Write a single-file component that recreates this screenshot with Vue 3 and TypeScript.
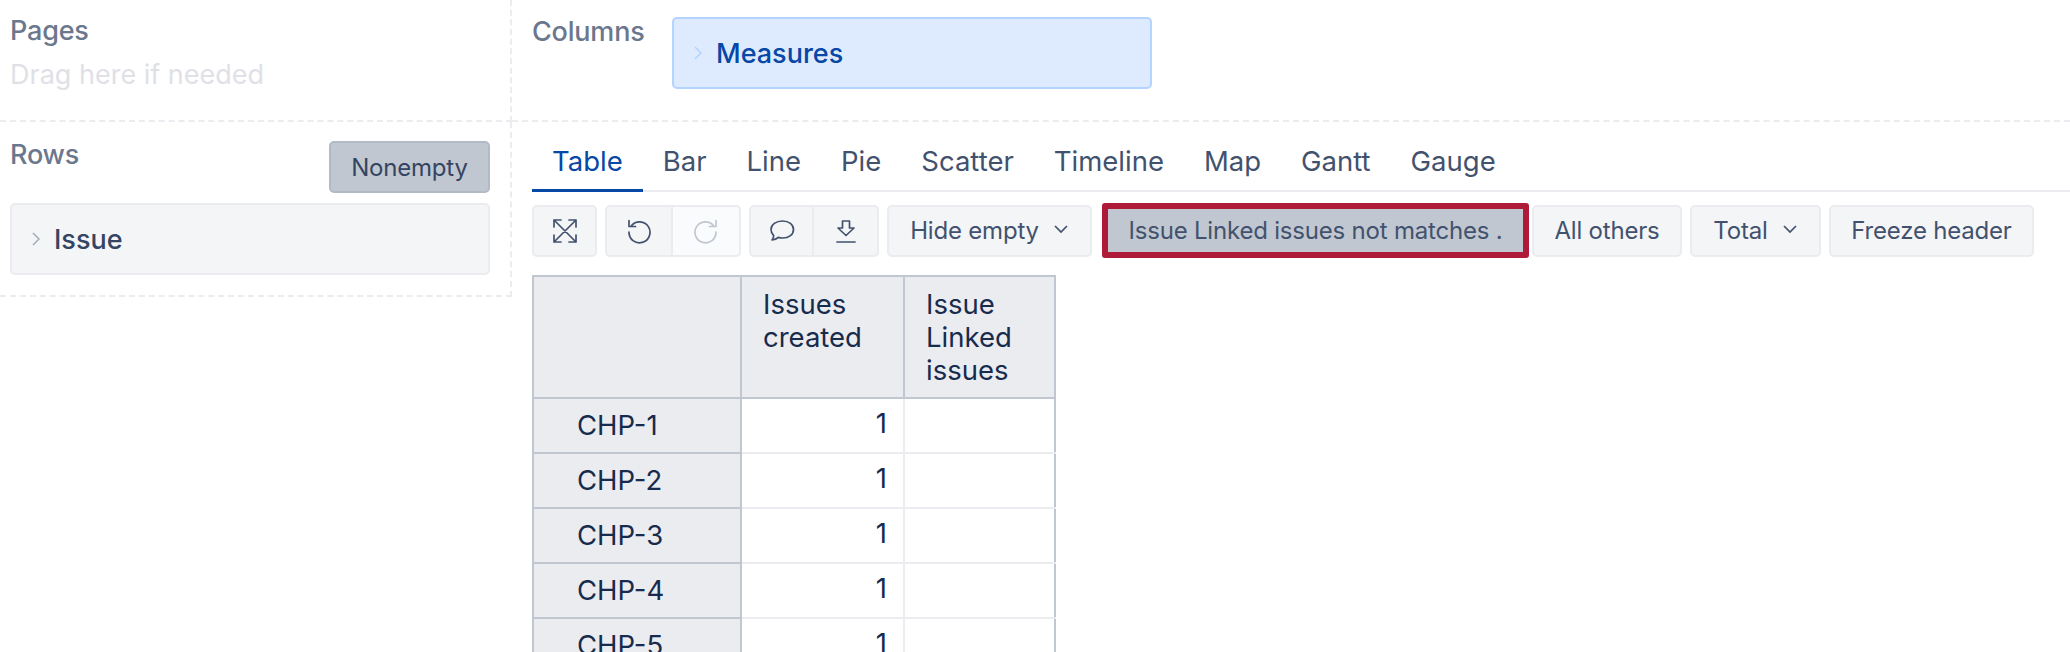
<script setup lang="ts">
const tabs: string[] = ['Table', 'Bar', 'Line', 'Pie', 'Scatter', 'Timeline', 'Map', 'Gantt', 'Gauge']
const rows: string[] = ['CHP-1', 'CHP-2', 'CHP-3', 'CHP-4', 'CHP-5']
</script>

<template>
  <div class="page">
    <section class="zone pages">
      <div class="label">Pages</div>
      <div class="hint">Drag here if needed</div>
    </section>
    <section class="zone columns">
      <div class="label">Columns</div>
      <div class="chip measures">
        <svg class="chev" viewBox="0 0 12 20" width="12" height="20"><path d="M3 4l6 6-6 6" /></svg>
        <span>Measures</span>
      </div>
    </section>
    <aside class="rows-zone">
      <div class="rows-head">
        <div class="label">Rows</div>
        <button class="btn active nonempty">Nonempty</button>
      </div>
      <div class="chip issue">
        <svg class="chev" viewBox="0 0 12 20" width="12" height="20"><path d="M3 4l6 6-6 6" /></svg>
        <span>Issue</span>
      </div>
    </aside>
    <main class="main">
      <nav class="tabs">
        <a v-for="(t, i) in tabs" :key="t" class="tab" :class="{ on: i === 0 }">{{ t }}</a>
      </nav>
      <div class="toolbar">
        <button class="btn icon solo" aria-label="Full screen">
          <svg viewBox="0 0 26 26" width="26" height="26"><path d="M2 9V2h7M2 2l22 22M17 24h7v-7M24 9V2h-7M24 2L2 24M9 24H2v-7" /></svg>
        </button>
        <div class="group">
          <button class="btn icon g1" aria-label="Undo">
            <svg viewBox="0 0 26 26" width="26" height="26"><path d="M5.5 7.5A10.5 10.5 0 1 1 3 14M3 2.5v6h6.5" /></svg>
          </button>
          <button class="btn icon g1 off" aria-label="Redo">
            <svg viewBox="0 0 26 26" width="26" height="26"><path d="M20.5 7.5A10.5 10.5 0 1 0 23 14M23 2.5v6h-6.500" /></svg>
          </button>
        </div>
        <div class="group">
          <button class="btn icon g2" aria-label="Comment">
            <svg viewBox="0 0 26 26" width="26" height="26"><path d="M13.500 3C20 3 24.500 6.500 24.500 11.500S20 20 13.500 20c-1.500 0-3-.2-4.200-.6-1.400 1.400-3.800 2.400-6.300 2.600 1.100-1.300 1.700-2.900 1.700-4.400C3 16 2 13.800 2 11.500 2 6.500 7 3 13.500 3z" /></svg>
          </button>
          <button class="btn icon g2" aria-label="Download">
            <svg viewBox="0 0 26 26" width="26" height="26"><path d="M9.500 3h7v7h4.500L13 17.500 5 10h4.500zM4 24h18" /></svg>
          </button>
        </div>
        <button class="btn text hide">
          Hide empty
          <svg class="down" viewBox="0 0 16 10" width="16" height="10"><path d="M2 2l6 6 6-6" /></svg>
        </button>
        <button class="btn active flagged">Issue Linked issues not matches .</button>
        <button class="btn text others">All others</button>
        <button class="btn text total">
          Total
          <svg class="down" viewBox="0 0 16 10" width="16" height="10"><path d="M2 2l6 6 6-6" /></svg>
        </button>
        <button class="btn text freeze">Freeze header</button>
      </div>
      <table class="report">
        <colgroup>
          <col class="c1" />
          <col class="c2" />
          <col class="c3" />
        </colgroup>
        <thead>
          <tr>
            <th></th>
            <th>Issues<br />created</th>
            <th>Issue<br />Linked<br />issues</th>
          </tr>
        </thead>
        <tbody>
          <tr v-for="r in rows" :key="r">
            <th class="rowhead">{{ r }}</th>
            <td class="num">1</td>
            <td></td>
          </tr>
        </tbody>
      </table>
    </main>
  </div>
</template>

<style scoped>
.page {
  display: grid;
  grid-template-columns: 512px 1fr;
  grid-template-rows: 122px 530px;
  width: 2070px;
  height: 652px;
  overflow: hidden;
  background: #fff;
  font-family: Inter, "Liberation Sans", sans-serif;
  color: #172b4d;
}
.zone {
  border-bottom: 2px dashed #ebecf0;
  box-sizing: border-box;
}
.pages {
  border-right: 2px dashed #ebecf0;
  padding: 15px 10px 0;
}
.columns {
  display: flex;
  align-items: flex-start;
  padding: 17px 0 0 20px;
}
.label {
  font-size: 27px;
  line-height: 32px;
  font-weight: 500;
  letter-spacing: -0.2px;
  color: #6b778c;
}
.columns .label {
  width: 140px;
  flex: none;
  margin-top: -1px;
}
.hint {
  margin-top: 12px;
  font-size: 27px;
  line-height: 32px;
  color: #dfe1e6;
}
.chip {
  box-sizing: border-box;
  display: flex;
  align-items: center;
  gap: 12px;
  border-radius: 5px;
  font-size: 27px;
  font-weight: 500;
}
.chev path {
  fill: none;
  stroke: currentColor;
  stroke-width: 1.5;
}
.measures {
  width: 480px;
  height: 72px;
  padding-left: 18px;
  background: #deebff;
  border: 2px solid #b3d4ff;
  color: #0747a6;
}
.measures .chev {
  color: #b3d4ff;
}
.rows-zone {
  box-sizing: border-box;
  height: 175px;
  padding: 19px 20px 0 10px;
  border-right: 2px dashed #ebecf0;
  border-bottom: 2px dashed #ebecf0;
}
.rows-head {
  display: flex;
  justify-content: space-between;
  align-items: flex-start;
}
.rows-head .label {
  margin-top: -2px;
}
.issue {
  width: 480px;
  height: 72px;
  margin-top: 10px;
  padding-left: 18px;
  background: #f4f5f7;
  border: 2px solid #ebecf0;
  color: #344563;
}
.issue .chev {
  color: #a5adba;
}
.btn {
  box-sizing: border-box;
  display: inline-flex;
  align-items: center;
  justify-content: center;
  height: 52px;
  padding: 0;
  background: #f4f5f7;
  border: 2px solid #ebecf0;
  border-radius: 5px;
  font-family: inherit;
  font-size: 24px;
  letter-spacing: -0.2px;
  color: #42526e;
}
.active {
  background: #c1c7d0;
  border-color: #b3bac5;
}
.nonempty {
  width: 161px;
  color: #344563;
}
.main {
  box-sizing: border-box;
  padding: 0 0 0 20px;
}
.tabs {
  display: flex;
  height: 70px;
  width: 1538px;
  box-sizing: border-box;
  padding-top: 4px;
  border-bottom: 2px solid #ebecf0;
}
.tab {
  box-sizing: border-box;
  height: 66px;
  margin-bottom: -2px;
  padding: 18px 20px 0;
  font-size: 27.5px;
  line-height: 34px;
  color: #42526e;
  white-space: nowrap;
}
.tab.on {
  color: #0747a6;
  border-bottom: 3px solid #0747a6;
}
.toolbar {
  display: flex;
  align-items: center;
  gap: 8px;
  height: 55px;
  margin-top: 11px;
}
.group {
  display: flex;
}
.icon svg path {
  fill: none;
  stroke: currentColor;
  stroke-width: 1.7;
  stroke-linecap: round;
  stroke-linejoin: round;
}
.solo {
  width: 65px;
}
.group .btn:first-child {
  border-radius: 5px 0 0 5px;
}
.group .btn:last-child {
  border-radius: 0 5px 5px 0;
  border-left: 0;
}
.g1 {
  width: 68px;
}
.g2 {
  width: 65px;
}
.off {
  background: #fafbfc;
  color: #c1c7d0;
}
.down {
  margin-left: 14px;
  margin-top: -4px;
}
.down path {
  fill: none;
  stroke: #42526e;
  stroke-width: 1.7;
}
.hide {
  width: 205px;
}
.flagged {
  width: 427px;
  height: 55px;
  margin: 0 -5px 0 2px;
  border: 6px solid #ae1a38;
  border-radius: 3px;
  position: relative;
}
.others {
  width: 150px;
}
.total {
  width: 131px;
}
.freeze {
  width: 205px;
}
.report {
  table-layout: fixed;
  width: 522px;
  margin-top: 17px;
  border-collapse: collapse;
  font-size: 27.5px;
  line-height: 33px;
  color: #172b4d;
}
.c1 {
  width: 208px;
}
.c2 {
  width: 163px;
}
.c3 {
  width: 151px;
}
.report th {
  background: #ebecf0;
  border: 2px solid #c1c7d0;
  font-weight: 400;
  text-align: left;
  vertical-align: top;
  padding: 11px 21px 10px;
}
.report th.rowhead {
  height: 55px;
  padding: 10px 0 0 43px;
  box-sizing: border-box;
}
.report td {
  height: 55px;
  box-sizing: border-box;
  background: #fff;
  border: 2px solid #ebecf0;
  border-right-color: #c1c7d0;
  padding: 0 16px 5px;
}
.report td.num {
  text-align: right;
  border-right-color: #ebecf0;
}
</style>
